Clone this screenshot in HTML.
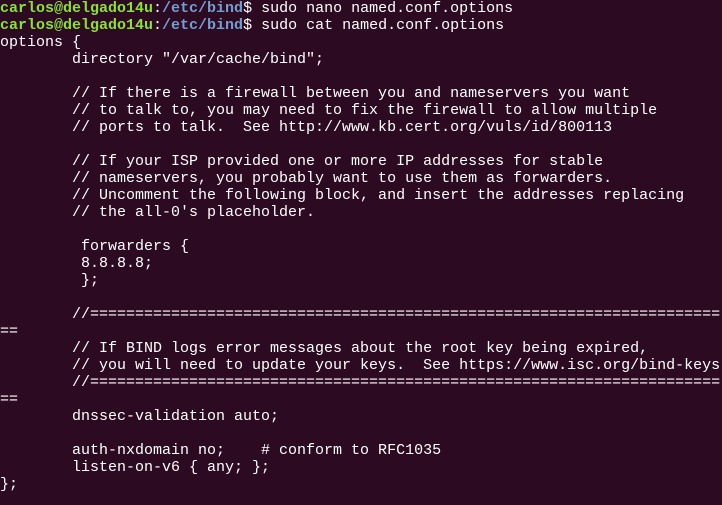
<!DOCTYPE html>
<html><head><meta charset="utf-8"><style>
html,body{margin:0;padding:0;background:#2c0a22;}
body{width:722px;height:505px;overflow:hidden;}
pre{margin:0;position:absolute;top:0px;left:0;font-family:"Liberation Mono",monospace;font-size:15px;line-height:17px;color:#ffffff;white-space:pre;}
.g{color:#8ae234;font-weight:bold}
.b{color:#729fcf;font-weight:bold}
</style></head><body><pre><span class="g">carlos@delgado14u</span>:<span class="b">/etc/bind</span>$ sudo nano named.conf.options
<span class="g">carlos@delgado14u</span>:<span class="b">/etc/bind</span>$ sudo cat named.conf.options
options {
        directory "/var/cache/bind";

        // If there is a firewall between you and nameservers you want
        // to talk to, you may need to fix the firewall to allow multiple
        // ports to talk.  See http://www.kb.cert.org/vuls/id/800113

        // If your ISP provided one or more IP addresses for stable
        // nameservers, you probably want to use them as forwarders.
        // Uncomment the following block, and insert the addresses replacing
        // the all-0's placeholder.

         forwarders {
         8.8.8.8;
         };

        //======================================================================
==
        // If BIND logs error messages about the root key being expired,
        // you will need to update your keys.  See https://www.isc.org/bind-keys
        //======================================================================
==
        dnssec-validation auto;

        auth-nxdomain no;    # conform to RFC1035
        listen-on-v6 { any; };
};</pre></body></html>
